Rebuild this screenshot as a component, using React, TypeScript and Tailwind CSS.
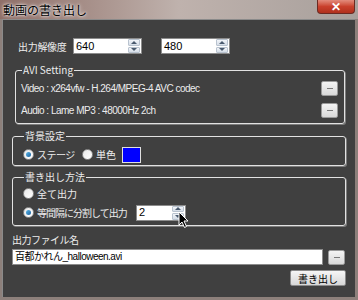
import React from 'react';

const jp = { fontFamily: '"Noto Sans CJK JP", "Liberation Sans", sans-serif' };
const latin = { fontFamily: '"Liberation Sans", "Noto Sans CJK JP", sans-serif' };

const Spinner: React.FC = () => (
    <div className="flex flex-col gap-[1px] w-[12px] h-[14px] mr-[1px]">
        <div className="flex-1 flex items-center justify-center rounded-[1px] border border-[#b9c3cf] bg-gradient-to-b from-[#f2f5f9] to-[#d5dde7]">
            <div className="w-0 h-0 border-l-[3px] border-r-[3px] border-b-[3px] border-l-transparent border-r-transparent border-b-[#4a5a6e]"></div>
        </div>
        <div className="flex-1 flex items-center justify-center rounded-[1px] border border-[#b9c3cf] bg-gradient-to-b from-[#f2f5f9] to-[#d5dde7]">
            <div className="w-0 h-0 border-l-[3px] border-r-[3px] border-t-[3px] border-l-transparent border-r-transparent border-t-[#4a5a6e]"></div>
        </div>
    </div>
);

const NumberBox: React.FC<{ value: string; width: string }> = ({ value, width }) => (
    <div className={`${width} h-[16px] bg-white border border-[#8c8c8c] flex items-center justify-between`}>
        <span className="pl-[2px] text-[11px] leading-none text-black" style={latin}>{value}</span>
        <Spinner />
    </div>
);

const DotsButton: React.FC = () => (
    <div className="w-[17px] h-[15px] rounded-[2px] border border-[#9a9a9a] bg-gradient-to-b from-[#f4f4f4] to-[#d9d9d9] flex items-center justify-center">
        <div className="w-[6px] h-[1px] bg-[#7a7a7a]"></div>
    </div>
);

const Radio: React.FC<{ checked?: boolean }> = ({ checked }) => (
    <div className="w-[11px] h-[11px] shrink-0 rounded-full border border-[#8f8f8f] bg-gradient-to-br from-[#e8e8e8] to-[#ffffff] flex items-center justify-center">
        {checked && <div className="w-[5px] h-[5px] rounded-full bg-gradient-to-br from-[#59b6e8] to-[#1a5f9c]"></div>}
    </div>
);

const Group: React.FC<{ title: string; className?: string; children: React.ReactNode }> = ({ title, className, children }) => (
    <fieldset className={`border border-[#e2e2e2] rounded-[3px] shadow-[1px_1px_0_#7c7c7c] ${className ?? ''}`}>
        <legend className="ml-[1px] px-[1px] text-[10px] leading-[12px] text-[#ececec]" style={jp}>{title}</legend>
        {children}
    </fieldset>
);

export default function App() {
    return (
        <div className="w-[358px] h-[300px] overflow-hidden relative bg-[#8d807b] flex flex-col select-none">
            {/* title bar */}
            <div className="h-[19px] shrink-0 bg-gradient-to-r from-[#8f6f68] via-[#bfb2ad] to-[#a8a09c] relative">
                <span className="absolute left-[3px] top-[2px] text-[12px] leading-[15px] text-black [text-shadow:0_0_4px_#fff,0_0_2px_#fff]" style={jp}>動画の書き出し</span>
                <div className="absolute left-[317px] top-0 w-[38px] h-[14px] rounded-b-[4px] border border-t-0 border-[#6b2a22] bg-gradient-to-b from-[#e28b7c] via-[#c9402c] to-[#b0301d] flex items-center justify-center">
                    <span className="text-white text-[12px] leading-none font-bold" style={latin}>✕</span>
                </div>
            </div>

            {/* client area */}
            <div className="flex-1 ml-[2px] mr-[3px] mb-[3px] bg-[#404040] border-t border-l border-[#8a8a8a] flex flex-col pl-[9px] pr-[9px] text-[#ececec]">
                <div className="flex items-center mt-[18px] h-[16px]">
                    <span className="ml-[6px] w-[55px] text-[10px] whitespace-nowrap tracking-[-0.3px]" style={jp}>出力解像度</span>
                    <NumberBox value="640" width="w-[69px]" />
                    <div className="w-[19px]"></div>
                    <NumberBox value="480" width="w-[69px]" />
                </div>

                <Group title="AVI Setting" className="mt-[10px] ml-[3px] mr-[1px] h-[60px] pl-[5px] pr-[6px]">
                    <div className="flex items-center justify-between h-[15px] mt-[5px]" style={latin}>
                        <span className="text-[10px] leading-none tracking-[-0.5px]">Video : x264vfw - H.264/MPEG-4 AVC codec</span>
                        <DotsButton />
                    </div>
                    <div className="flex items-center justify-between h-[15px] mt-[7px]" style={latin}>
                        <span className="text-[10px] leading-none tracking-[-0.5px]">Audio : Lame MP3 : 48000Hz 2ch</span>
                        <DotsButton />
                    </div>
                </Group>

                <Group title="背景設定" className="mt-[6px] h-[36px] pl-[10px]">
                    <div className="flex items-center h-[17px] mt-[4px] text-[10px]" style={jp}>
                        <Radio checked />
                        <span className="ml-[3px] w-[45px] whitespace-nowrap tracking-[-0.5px]">ステージ</span>
                        <Radio />
                        <span className="ml-[3px] w-[26px] whitespace-nowrap">単色</span>
                        <div className="w-[19px] h-[16px] border border-[#e0e0e0] bg-[#0000ff]"></div>
                    </div>
                </Group>

                <Group title="書き出し方法" className="mt-[5px] h-[55px] pl-[10px]">
                    <div className="flex items-center h-[16px] mt-[2px] text-[10px]" style={jp}>
                        <Radio />
                        <span className="ml-[3px] whitespace-nowrap">全て出力</span>
                    </div>
                    <div className="flex items-center h-[17px] mt-[3px] text-[10px]" style={jp}>
                        <Radio checked />
                        <span className="ml-[3px] w-[99px] whitespace-nowrap tracking-[-1px]">等間隔に分割して出力</span>
                        <div className="relative">
                            <NumberBox value="2" width="w-[50px]" />
                            <svg className="absolute left-[42px] top-[6px]" width="12" height="18" viewBox="0 0 12 18">
                                <path d="M1 1 L1 14 L4 11 L6.5 16.5 L8.5 15.5 L6 10 L10 10 Z" fill="#000" stroke="#fff" strokeWidth="1" />
                            </svg>
                        </div>
                    </div>
                </Group>

                <span className="mt-[7px] text-[10px] leading-[14px] tracking-[-0.5px]" style={jp}>出力ファイル名</span>
                <div className="flex items-center mt-[2px]">
                    <div className="w-[311px] h-[16px] bg-white border border-[#8c8c8c] flex items-center">
                        <span className="pl-[2px] text-[10px] leading-none text-black tracking-[-0.5px]" style={latin}>百都かれん_halloween.avi</span>
                    </div>
                    <div className="ml-[5px]"><DotsButton /></div>
                </div>
                <div className="flex justify-end mt-[5px]">
                    <div className="w-[56px] h-[16px] rounded-[2px] border border-[#8a8a8a] bg-gradient-to-b from-[#f6f6f6] to-[#d6d6d6] flex items-center justify-center text-[10px] text-black" style={jp}>書き出し</div>
                </div>
            </div>
        </div>
    );
}
